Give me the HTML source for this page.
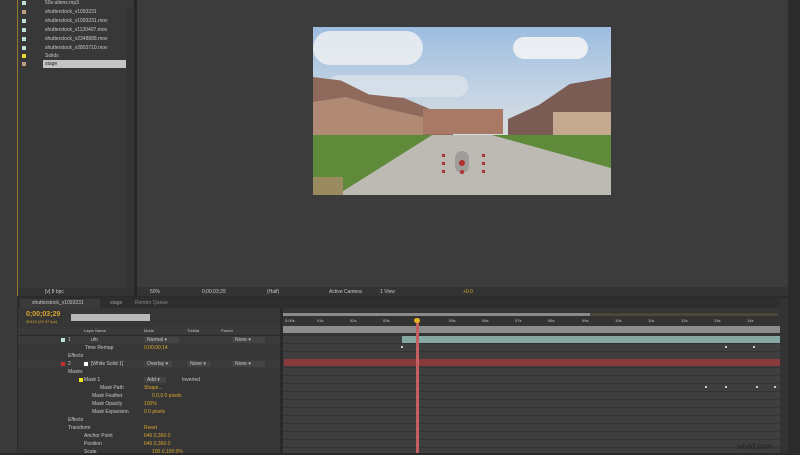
<!DOCTYPE html><html><head><style>
*{margin:0;padding:0;box-sizing:border-box}
body{width:800px;height:453px;background:#2b2b2b;position:relative;overflow:hidden;font-family:"Liberation Sans",sans-serif;font-size:5px;color:#c8c8c8}
.a{position:absolute}
.t{position:absolute;white-space:nowrap;font-size:5px}
.o{color:#d9a62e}
</style></head><body>
<div class="a" style="left:0;top:0;width:17px;height:453px;background:#3a3a3a"></div>
<div class="a" style="left:17px;top:0;width:1px;height:296px;background:#9a7a2a"></div>
<div class="a" style="left:18px;top:0;width:116px;height:296px;background:#383838"></div>
<div class="a" style="left:126px;top:8px;width:7px;height:280px;background:#333"></div>
<div class="a" style="left:43px;top:60px;width:83px;height:8px;background:#c4c4c4"></div>
<div class="t" style="left:45px;top:0px">50s-aliens.mp3</div>
<div class="t" style="left:45px;top:9px">shutterstock_v1093231</div>
<div class="t" style="left:45px;top:18px">shutterstock_v1093231.mov</div>
<div class="t" style="left:45px;top:27px">shutterstock_v1130407.mov</div>
<div class="t" style="left:45px;top:36px">shutterstock_v2348888.mov</div>
<div class="t" style="left:45px;top:45px">shutterstock_v2803710.mov</div>
<div class="t" style="left:45px;top:53px">Solids</div>
<div class="t" style="left:45px;top:61px;color:#222">stage</div>
<div class="a" style="left:22px;top:1px;width:4px;height:4px;background:#bfe0d8"></div>
<div class="a" style="left:22px;top:10px;width:4px;height:4px;background:#b8a080"></div>
<div class="a" style="left:22px;top:19px;width:4px;height:4px;background:#bfe0d8"></div>
<div class="a" style="left:22px;top:28px;width:4px;height:4px;background:#bfe0d8"></div>
<div class="a" style="left:22px;top:37px;width:4px;height:4px;background:#bfe0d8"></div>
<div class="a" style="left:22px;top:46px;width:4px;height:4px;background:#bfe0d8"></div>
<div class="a" style="left:22px;top:54px;width:4px;height:4px;background:#e8d830"></div>
<div class="a" style="left:22px;top:62px;width:4px;height:4px;background:#b8a080"></div>
<div class="a" style="left:18px;top:288px;width:116px;height:8px;background:#333"></div>
<div class="t" style="left:45px;top:289px">[v] 8 bpc</div>
<div class="a" style="left:134px;top:0;width:3px;height:296px;background:#262626"></div>
<div class="a" style="left:137px;top:0;width:663px;height:287px;background:#3c3c3c"></div>
<div class="a" style="left:137px;top:287px;width:663px;height:9px;background:#333"></div>
<div class="t" style="left:150px;top:289px">50%</div>
<div class="t" style="left:202px;top:289px">0;00;03;29</div>
<div class="t" style="left:267px;top:289px">(Half)</div>
<div class="t" style="left:329px;top:289px">Active Camera</div>
<div class="t" style="left:380px;top:289px">1 View</div>
<div class="t o" style="left:463px;top:289px">+0.0</div>
<!-- photo -->
<div class="a" style="left:313px;top:27px;width:298px;height:168px;overflow:hidden;background:linear-gradient(#9dbde0 0%,#c4d4e4 40%,#d4dbe0 60%)">
 <div class="a" style="left:0;top:4px;width:110px;height:34px;border-radius:17px;background:#eef0f2;opacity:.85"></div>
 <div class="a" style="left:15px;top:48px;width:140px;height:22px;border-radius:11px;background:#e4e8ec;opacity:.6"></div>
 <div class="a" style="left:200px;top:10px;width:75px;height:22px;border-radius:11px;background:#f2f3f5;opacity:.9"></div>
 <div class="a" style="left:0;top:50px;width:140px;height:70px;background:#8e6a5c;clip-path:polygon(0 0,20% 5%,40% 25%,65% 30%,100% 60%,100% 100%,0 100%)"></div>
 <div class="a" style="left:0;top:70px;width:110px;height:50px;background:#b08a74;clip-path:polygon(0 10%,30% 0,60% 20%,100% 40%,100% 100%,0 100%)"></div>
 <div class="a" style="left:110px;top:82px;width:80px;height:25px;background:#a87a66"></div>
 <div class="a" style="left:195px;top:50px;width:103px;height:70px;background:#7a5c54;clip-path:polygon(0 60%,30% 40%,60% 10%,100% 0,100% 100%,0 100%)"></div>
 <div class="a" style="left:240px;top:85px;width:58px;height:35px;background:#c4a890"></div>
 <div class="a" style="left:0;top:108px;width:298px;height:60px;background:#5e8a3a"></div>
 <div class="a" style="left:0;top:108px;width:298px;height:60px;background:#bdbab4;clip-path:polygon(40% 0,60% 0,100% 55%,100% 100%,8% 100%)"></div>
 <div class="a" style="left:0;top:150px;width:30px;height:18px;background:#9a8a60"></div>
 <div class="a" style="left:129px;top:127px;width:3px;height:3px;background:#b03030"></div>
 <div class="a" style="left:129px;top:135px;width:3px;height:3px;background:#b03030"></div>
 <div class="a" style="left:129px;top:143px;width:3px;height:3px;background:#b03030"></div>
 <div class="a" style="left:169px;top:127px;width:3px;height:3px;background:#b03030"></div>
 <div class="a" style="left:169px;top:135px;width:3px;height:3px;background:#b03030"></div>
 <div class="a" style="left:169px;top:143px;width:3px;height:3px;background:#b03030"></div>
 <div class="a" style="left:142px;top:124px;width:14px;height:22px;border-radius:7px;background:#8a8a88;opacity:.6"></div>
 <div class="a" style="left:146px;top:133px;width:6px;height:6px;border-radius:3px;background:#b03030"></div>
 <div class="a" style="left:147px;top:143px;width:4px;height:4px;border-radius:2px;background:#b03030"></div>
</div>
<!-- timeline -->
<div class="a" style="left:18px;top:298px;width:762px;height:155px;background:#363636"></div>
<div class="a" style="left:18px;top:298px;width:762px;height:10px;background:#2e2e2e"></div>
<div class="a" style="left:20px;top:299px;width:80px;height:9px;background:#3a3a3a"></div>
<div class="t" style="left:32px;top:300px">shutterstock_v1093231</div>
<div class="t" style="left:110px;top:300px;color:#999">stage</div>
<div class="t" style="left:135px;top:300px;color:#888">Render Queue</div>
<div class="t o" style="left:26px;top:311px;font-size:7px;font-weight:bold">0;00;03;29</div>
<div class="t o" style="left:26px;top:319px;font-size:4px">00119 (29.97 fps)</div>
<div class="a" style="left:71px;top:314px;width:79px;height:7px;background:#b8b8b8"></div>
<div class="a" style="left:18px;top:327px;width:262px;height:7px;background:#3a3a3a"></div>
<div class="t" style="left:84px;top:328px;font-size:4px">Layer Name</div>
<div class="t" style="left:144px;top:328px;font-size:4px">Mode</div>
<div class="t" style="left:187px;top:328px;font-size:4px">TrkMat</div>
<div class="t" style="left:221px;top:328px;font-size:4px">Parent</div>
<div class="a" style="left:18px;top:335px;width:262px;height:1px;background:#2a2a2a"></div>
<div class="a" style="left:18px;top:336px;width:262px;height:8px;background:#3a3a3a"></div>
<div class="a" style="left:18px;top:360px;width:262px;height:8px;background:#3a3a3a"></div>
<div class="a" style="left:61px;top:338px;width:4px;height:4px;background:#bfe0d8"></div>
<div class="a" style="left:61px;top:362px;width:4px;height:4px;background:#c03030"></div>
<div class="a" style="left:84px;top:362px;width:4px;height:4px;background:#fff"></div>
<div class="a" style="left:79px;top:378px;width:4px;height:4px;background:#e8e820"></div>
<div class="t" style="left:68px;top:337px">1</div><div class="t" style="left:91px;top:337px">ufo</div>
<div class="t" style="left:144px;top:337px;background:#444;padding:0 12px 0 3px">Normal ▾</div><div class="t" style="left:232px;top:337px;background:#444;padding:0 14px 0 3px">None ▾</div>
<div class="t" style="left:85px;top:345px">Time Remap</div><div class="t o" style="left:144px;top:345px">0;00;00;14</div>
<div class="t" style="left:68px;top:353px">Effects</div>
<div class="t" style="left:68px;top:361px">2</div><div class="t" style="left:91px;top:361px">[White Solid 1]</div>
<div class="t" style="left:144px;top:361px;background:#444;padding:0 4px 0 3px">Overlay ▾</div><div class="t" style="left:187px;top:361px;background:#444;padding:0 4px 0 3px">None ▾</div><div class="t" style="left:232px;top:361px;background:#444;padding:0 14px 0 3px">None ▾</div>
<div class="t" style="left:68px;top:369px">Masks</div>
<div class="t" style="left:84px;top:377px">Mask 1</div><div class="t" style="left:144px;top:377px;background:#444;padding:0 6px 0 3px">Add ▾</div><div class="t" style="left:182px;top:377px">Inverted</div>
<div class="t" style="left:100px;top:385px">Mask Path</div><div class="t o" style="left:144px;top:385px">Shape...</div>
<div class="t" style="left:92px;top:393px">Mask Feather</div><div class="t o" style="left:152px;top:393px">0.0,0.0 pixels</div>
<div class="t" style="left:92px;top:401px">Mask Opacity</div><div class="t o" style="left:144px;top:401px">100%</div>
<div class="t" style="left:92px;top:409px">Mask Expansion</div><div class="t o" style="left:144px;top:409px">0.0 pixels</div>
<div class="t" style="left:68px;top:417px">Effects</div>
<div class="t" style="left:68px;top:425px">Transform</div><div class="t o" style="left:144px;top:425px">Reset</div>
<div class="t" style="left:84px;top:433px">Anchor Point</div><div class="t o" style="left:144px;top:433px">640.0,360.0</div>
<div class="t" style="left:84px;top:441px">Position</div><div class="t o" style="left:144px;top:441px">640.0,360.0</div>
<div class="t" style="left:84px;top:449px">Scale</div><div class="t o" style="left:152px;top:449px">100.0,100.0%</div>
<div class="a" style="left:280px;top:308px;width:3px;height:145px;background:#2a2a2a"></div>
<div class="a" style="left:283px;top:312px;width:497px;height:24px;background:#333"></div>
<div class="a" style="left:283px;top:313px;width:307px;height:3px;background:#8a8a8a"></div>
<div class="a" style="left:590px;top:313px;width:188px;height:3px;background:#4a4638"></div>
<div class="a" style="left:283px;top:326px;width:497px;height:7px;background:#8c8c8c"></div>
<div class="t" style="left:285px;top:318px;font-size:4px">0:00s</div>
<div class="t" style="left:317px;top:318px;font-size:4px">01s</div><div class="t" style="left:350px;top:318px;font-size:4px">02s</div><div class="t" style="left:383px;top:318px;font-size:4px">03s</div>
<div class="t" style="left:449px;top:318px;font-size:4px">05s</div><div class="t" style="left:482px;top:318px;font-size:4px">06s</div><div class="t" style="left:515px;top:318px;font-size:4px">07s</div><div class="t" style="left:548px;top:318px;font-size:4px">08s</div><div class="t" style="left:582px;top:318px;font-size:4px">09s</div><div class="t" style="left:615px;top:318px;font-size:4px">10s</div><div class="t" style="left:648px;top:318px;font-size:4px">11s</div><div class="t" style="left:681px;top:318px;font-size:4px">12s</div><div class="t" style="left:714px;top:318px;font-size:4px">13s</div><div class="t" style="left:747px;top:318px;font-size:4px">14s</div>
<div class="a" style="left:283px;top:336px;width:497px;height:117px;background:repeating-linear-gradient(#3e3e3e 0 7px,#343434 7px 8px)"></div>
<div class="a" style="left:402px;top:336px;width:378px;height:7px;background:#86a8a2"></div>
<div class="a" style="left:284px;top:359px;width:496px;height:7px;background:#8a3a3a"></div>
<div class="a" style="left:416px;top:319px;width:3px;height:134px;background:#c56060"></div>
<div class="a" style="left:414px;top:318px;width:6px;height:5px;border-radius:3px;background:#e0b020"></div>
<div class="a" style="left:401px;top:346px;width:2px;height:2px;background:#ccc"></div>
<div class="a" style="left:725px;top:346px;width:2px;height:2px;background:#ccc"></div><div class="a" style="left:753px;top:346px;width:2px;height:2px;background:#ccc"></div>
<div class="a" style="left:705px;top:386px;width:2px;height:2px;background:#ccc"></div><div class="a" style="left:725px;top:386px;width:2px;height:2px;background:#ccc"></div><div class="a" style="left:756px;top:386px;width:2px;height:2px;background:#ccc"></div><div class="a" style="left:774px;top:386px;width:2px;height:2px;background:#ccc"></div>
<div class="a" style="left:780px;top:298px;width:8px;height:155px;background:#333"></div>
<div class="a" style="left:788px;top:0;width:12px;height:453px;background:#2b2b2b"></div>
<div class="t" style="left:737px;top:442px;font-size:8px;color:#222">wtvid.com</div>
</body></html>
